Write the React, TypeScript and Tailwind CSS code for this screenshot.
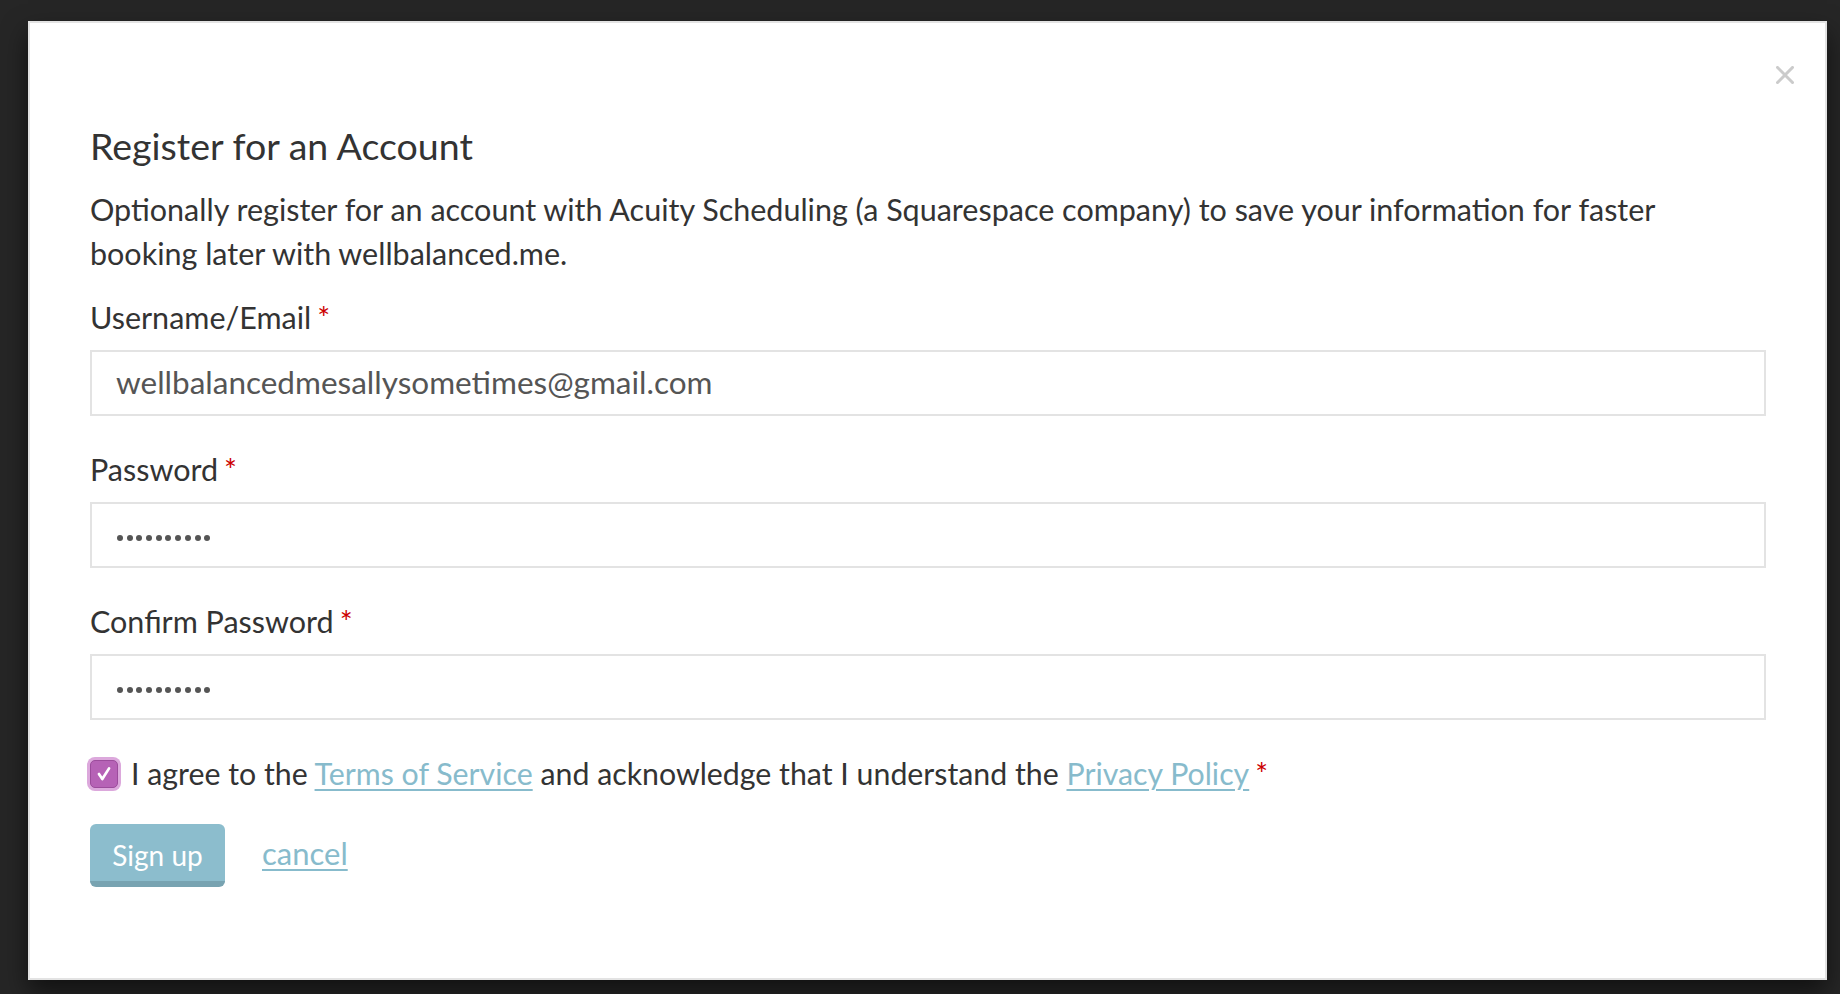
import React from 'react';

const Required = () => <span className="text-[#c00] ml-[6px]">*</span>;

const Field = ({ label, children }: { label: string; children: React.ReactNode }) => (
  <div className="mb-[32px]">
    <label className="block text-[30.5px] leading-[43px] mb-[11px]">
      {label}
      <Required />
    </label>
    {children}
  </div>
);

const Dots = () => (
  <div className="flex items-center gap-[3.7px]">
    {Array.from({ length: 10 }).map((_, i) => (
      <span key={i} className="w-[6px] h-[6px] rounded-full bg-[#555]"></span>
    ))}
  </div>
);

const App = () => {
  return (
    <div className="h-[994px] w-full overflow-hidden bg-[#262626] pt-[21px] pl-[28px] pr-[13px] font-['Lato',sans-serif] text-[#333]">
      <div className="h-[959px] bg-white border-2 border-[#e3e3e3] shadow-[0_12px_24px_rgba(0,0,0,0.55)] pl-[60px] pr-[59px]">
        {/* close */}
        <div className="flex justify-end pt-[37px] -mr-[34px]">
          <button className="w-[30px] h-[30px] flex items-center justify-center">
            <svg width="18" height="18" viewBox="0 0 18 18">
              <path d="M1.5 1.5 L16.5 16.5 M16.5 1.5 L1.5 16.5" stroke="#cbcbcb" strokeWidth="3" strokeLinecap="square" />
            </svg>
          </button>
        </div>

        <h4 className="mt-[36px] text-[37.5px] leading-[40px]">Register for an Account</h4>
        <p className="mt-[22px] text-[30.5px] leading-[43.5px]">
          Optionally register for an account with Acuity Scheduling (a Squarespace company) to save your information for faster booking later with wellbalanced.me.
        </p>

        <div className="mt-[21px]">
          <Field label="Username/Email">
            <div className="h-[66px] border-2 border-[#e3e3e3] pl-[24px] flex items-center text-[31.5px] text-[#555]">
              wellbalancedmesallysometimes@gmail.com
            </div>
          </Field>
          <Field label="Password">
            <div className="h-[66px] border-2 border-[#e3e3e3] pl-[25px] flex items-center pt-[6px]">
              <Dots />
            </div>
          </Field>
          <Field label="Confirm Password">
            <div className="h-[66px] border-2 border-[#e3e3e3] pl-[25px] flex items-center pt-[6px]">
              <Dots />
            </div>
          </Field>

          <div className="flex items-center h-[43px] text-[30.3px]">
            <span className="-ml-[3px] w-[34px] h-[34px] rounded-[8px] bg-[#dca8dc] flex items-center justify-center">
              <span className="w-[28px] h-[28px] rounded-[5px] bg-[#b662b6] border border-[#9c4c9c] flex items-center justify-center">
                <svg width="18" height="18" viewBox="0 0 16 16">
                  <path d="M3.5 8 L6.5 12.5 L12.5 3" fill="none" stroke="#fff" strokeWidth="2.4" strokeLinecap="round" strokeLinejoin="round" />
                </svg>
              </span>
            </span>
            <span className="ml-[10px]">
              I agree to the{' '}
              <a className="text-[#87bbcc] underline underline-offset-[4px] decoration-[2px]">Terms of Service</a>{' '}
              and acknowledge that I understand the{' '}
              <a className="text-[#87bbcc] underline underline-offset-[4px] decoration-[2px]">Privacy Policy</a>
              <Required />
            </span>
          </div>

          <div className="mt-[29px] flex items-center">
            <button className="w-[135px] h-[63px] rounded-[6px] bg-[#8cbdcd] border-b-[6px] border-[#78a3b1] text-white text-[28px] pt-[4px]">
              Sign up
            </button>
            <a className="ml-[37px] -mt-[4px] text-[31px] text-[#87bbcc] underline underline-offset-[4px] decoration-[2px]">cancel</a>
          </div>
        </div>
      </div>
    </div>
  );
};

export default App;
